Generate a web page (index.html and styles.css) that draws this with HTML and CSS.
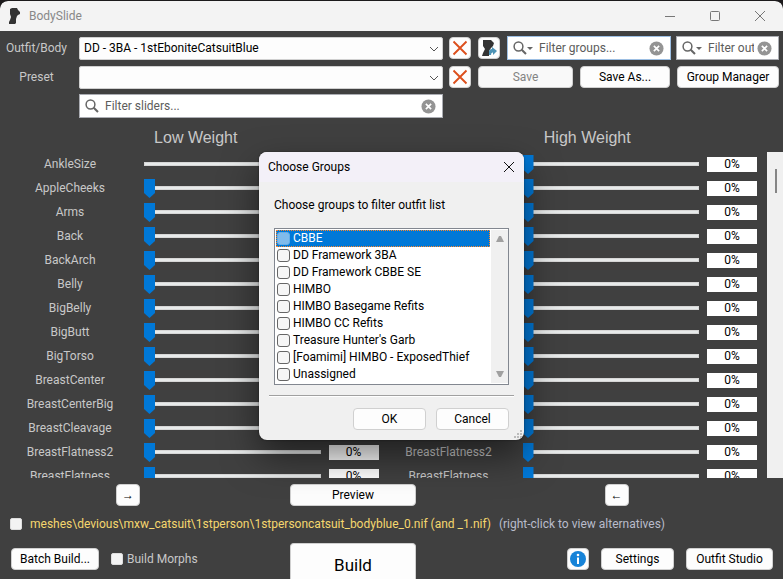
FILE: index.html
```html
<!DOCTYPE html>
<html lang="en">
<head>
    <meta charset="UTF-8">
    <meta name="viewport" content="width=device-width, initial-scale=1.0">
    <title>BodySlide</title>
    <link rel="stylesheet" href="styles.css">
</head>
<body>

    <!-- Shared icons -->
    <svg class="sprite" aria-hidden="true">
        <symbol id="icon-search" viewBox="0 0 14 14">
            <circle cx="5.500" cy="5.500" r="4.400" fill="none" stroke="#666" stroke-width="1.500"/>
            <path d="M8.700 8.700L13 13" stroke="#666" stroke-width="2"/>
        </symbol>
        <symbol id="icon-clear" viewBox="0 0 16 16">
            <circle cx="8" cy="8" r="7.500" fill="#949494"/>
            <path d="M5.200 5.200L10.800 10.800M10.800 5.200L5.200 10.800" stroke="#fff" stroke-width="1.800"/>
        </symbol>
        <symbol id="icon-delete" viewBox="0 0 16 16">
            <path d="M1.500 1.500L14.500 14.500M14.500 1.500L1.500 14.500" stroke="#dc4f1c" stroke-width="1.900"/>
        </symbol>
        <symbol id="icon-chevron" viewBox="0 0 10 6">
            <path d="M1 1L5 5L9 1" fill="none" stroke="#555" stroke-width="1"/>
        </symbol>
        <symbol id="icon-body" viewBox="0 0 14 16">
            <path d="M2 1L4 0H9L10 2L12 4L12 6L10 7L9 8L8 11V15L7 16H1V14L2 12L3 9L2 6Z" fill="#333"/>
        </symbol>
    </svg>

    <div class="window">
        <header class="titlebar">
            <svg class="app-icon"><use href="#icon-body"/></svg>
            <h1>BodySlide</h1>
            <div class="window-buttons">
                <button type="button" aria-label="Minimize"><svg viewBox="0 0 10 10"><path d="M0 5.5H10" stroke="#777"/></svg></button>
                <button type="button" aria-label="Maximize"><svg viewBox="0 0 10 10"><rect x=".5" y=".5" width="9" height="9" rx="1" fill="none" stroke="#777"/></svg></button>
                <button type="button" aria-label="Close"><svg viewBox="0 0 10 10"><path d="M0 0L10 10M10 0L0 10" stroke="#777"/></svg></button>
            </div>
        </header>

        <!-- Outfit and preset selection -->
        <div class="toolbar">
            <label for="outfit">Outfit/Body</label>
            <div class="combo">
                <select id="outfit">
                    <option>DD - 3BA - 1stEboniteCatsuitBlue</option>
                </select>
                <svg class="chevron"><use href="#icon-chevron"/></svg>
            </div>
            <div class="tools">
                <button type="button" class="btn icon-btn" aria-label="Clear outfit"><svg><use href="#icon-delete"/></svg></button>
                <button type="button" class="btn icon-btn" aria-label="Choose outfit">
                    <svg viewBox="0 0 16 16">
                        <path d="M2 0H10L13 3L12 6L10 8L8 11V16H1L2 13L4 9L2 6Z" fill="#333"/>
                        <path d="M8 15V12Q8 9 11 9V7L16 11L12 15V12.500Q10 12 10 15Z" fill="#4d93b5"/>
                    </svg>
                </button>
                <div class="search search-groups focused">
                    <svg class="magnifier"><use href="#icon-search"/></svg><span class="drop"></span>
                    <input type="text" aria-label="Filter groups" placeholder="Filter groups...">
                    <button type="button" class="clear" aria-label="Clear groups filter"><svg><use href="#icon-clear"/></svg></button>
                </div>
                <div class="search search-outfits">
                    <svg class="magnifier"><use href="#icon-search"/></svg><span class="drop"></span>
                    <input type="text" aria-label="Filter outfits" placeholder="Filter outfits...">
                    <button type="button" class="clear" aria-label="Clear outfits filter"><svg><use href="#icon-clear"/></svg></button>
                </div>
            </div>

            <label for="preset">Preset</label>
            <div class="combo">
                <select id="preset"><option></option></select>
                <svg class="chevron"><use href="#icon-chevron"/></svg>
            </div>
            <div class="tools">
                <button type="button" class="btn icon-btn" aria-label="Clear preset"><svg><use href="#icon-delete"/></svg></button>
                <button type="button" class="btn save" disabled>Save</button>
                <button type="button" class="btn save-as">Save As...</button>
                <button type="button" class="btn group-manager">Group Manager</button>
            </div>

            <div class="search search-sliders">
                <svg class="magnifier"><use href="#icon-search"/></svg>
                <input type="text" aria-label="Filter sliders" placeholder="Filter sliders...">
                <button type="button" class="clear" aria-label="Clear sliders filter"><svg><use href="#icon-clear"/></svg></button>
            </div>
        </div>

        <div class="weights">
            <h2>Low Weight</h2>
            <h2>High Weight</h2>
        </div>

        <!-- Sliders are filled in by the script below -->
        <div class="slider-area">
            <div class="sliders" id="sliders"></div>
            <div class="scrollbar"><div class="scroll-thumb"></div></div>
        </div>

        <div class="preview-bar">
            <button type="button" class="btn arrow" aria-label="Copy low to high">→</button>
            <button type="button" class="btn wide">Preview</button>
            <button type="button" class="btn arrow" aria-label="Copy high to low">←</button>
        </div>

        <div class="output">
            <input type="checkbox" class="check" id="outputPath">
            <label for="outputPath">meshes\devious\mxw_catsuit\1stperson\1stpersoncatsuit_bodyblue_0.nif (and _1.nif)</label>
            <span>(right-click to view alternatives)</span>
        </div>

        <footer class="footer">
            <div class="footer-left">
                <button type="button" class="btn batch">Batch Build...</button>
                <input type="checkbox" class="check" id="morphs">
                <label for="morphs">Build Morphs</label>
            </div>
            <button type="button" class="btn wide build">Build</button>
            <div class="footer-right">
                <button type="button" class="btn icon-btn" aria-label="About">
                    <svg viewBox="0 0 16 16">
                        <circle cx="8" cy="8" r="8" fill="#1683d8"/>
                        <circle cx="8" cy="4" r="1.300" fill="#fff"/>
                        <path d="M8 6.500V13" stroke="#fff" stroke-width="2"/>
                    </svg>
                </button>
                <button type="button" class="btn settings">Settings</button>
                <button type="button" class="btn studio">Outfit Studio</button>
            </div>
        </footer>

        <!-- Group chooser -->
        <div class="overlay">
            <dialog open class="dialog" aria-labelledby="dialogTitle">
                <div class="dialog-title">
                    <h2 id="dialogTitle">Choose Groups</h2>
                    <button type="button" aria-label="Close"><svg viewBox="0 0 10 10"><path d="M0 0L10 10M10 0L0 10" stroke="#111"/></svg></button>
                </div>
                <p>Choose groups to filter outfit list</p>
                <div class="listbox">
                    <div class="groups" id="groups"></div>
                    <div class="list-scroll">
                        <svg viewBox="0 0 10 8"><path d="M1 7L4 1H6L9 7Z" fill="#a0a0a0"/></svg>
                        <svg viewBox="0 0 10 8"><path d="M1 1L4 7H6L9 1Z" fill="#a0a0a0"/></svg>
                    </div>
                </div>
                <hr>
                <div class="dialog-buttons">
                    <button type="button" class="btn">OK</button>
                    <button type="button" class="btn">Cancel</button>
                </div>
                <svg class="grip" viewBox="0 0 8 8">
                    <path d="M6 0h2v2h-2zM3 3h2v2h-2zM6 3h2v2h-2zM0 6h2v2h-2zM3 6h2v2h-2zM6 6h2v2h-2z" fill="#bbb"/>
                </svg>
            </dialog>
        </div>
    </div>

    <script>
        const sliderNames = [
            'AnkleSize', 'AppleCheeks', 'Arms', 'Back', 'BackArch', 'Belly', 'BigBelly',
            'BigButt', 'BigTorso', 'BreastCenter', 'BreastCenterBig', 'BreastCleavage',
            'BreastFlatness2', 'BreastFlatness'
        ];
        const groupNames = [
            'CBBE', 'DD Framework 3BA', 'DD Framework CBBE SE', 'HIMBO',
            'HIMBO Basegame Refits', 'HIMBO CC Refits', "Treasure Hunter's Garb",
            '[Foamimi] HIMBO - ExposedThief', 'Unassigned'
        ];

        const sliders = document.getElementById('sliders');
        const groups = document.getElementById('groups');

        // One low and one high slider for every name
        sliderNames.forEach((name, i) => {
            ['low', 'high'].forEach((side) => {
                const id = side + name;
                const hidden = i === 0 && side === 'low' ? ' class="no-thumb"' : '';
                sliders.innerHTML += `
                    <div class="slider-row">
                        <label for="${id}">${name}</label>
                        <input type="range" id="${id}" min="0" max="100" value="0"${hidden}>
                        <input type="text" aria-label="${name} ${side} value" value="0%">
                    </div>`;
            });
        });

        groupNames.forEach((name, i) => {
            groups.innerHTML += `
                <label class="group${i === 0 ? ' selected' : ''}">
                    <input type="checkbox"><span>${name}</span>
                </label>`;
        });
    </script>

</body>
</html>
```
FILE: styles.css
```css
* {
    margin: 0;
    padding: 0;
    box-sizing: border-box;
}

body {
    background: #1c1a1b;
    color: #c8c8c8;
    font-family: Roboto, "Open Sans", sans-serif;
    font-size: 12px;
    line-height: 16px;
    overflow: hidden;
}

button,
input,
select {
    font: inherit;
}

h1,
h2 {
    font-size: 12px;
    font-weight: 400;
}

svg {
    display: block;
    flex: none;
}

.sprite {
    position: absolute;
    width: 0;
    height: 0;
}

.window {
    position: relative;
    display: flex;
    flex-direction: column;
    height: 100vh;
    border-top: 1px solid #1c1a1b;
    border-radius: 8px 8px 0 0;
    background: #404040;
    overflow: hidden;
}

/* Title bar */
.titlebar {
    display: flex;
    align-items: center;
    flex: none;
    height: 30px;
    padding: 0 1px 0 8px;
    background: #f3f3f3;
    color: #888;
    border-radius: 8px 8px 0 0;
}

.app-icon {
    width: 14px;
    height: 16px;
    margin-right: 7px;
}

.window-buttons {
    display: flex;
    margin-left: auto;
}

.window-buttons button {
    display: flex;
    align-items: center;
    justify-content: center;
    width: 45px;
    height: 28px;
    border: none;
    background: none;
}

.window-buttons svg {
    width: 10px;
    height: 10px;
}

/* Buttons */
.btn {
    height: 22px;
    border: 1px solid #d0d0d0;
    border-radius: 4px;
    background: #fdfdfd;
    color: #000;
    white-space: nowrap;
    line-height: 18px;
}

.btn:disabled {
    background: #f9f9f9;
    color: #838383;
}

.icon-btn {
    display: flex;
    align-items: center;
    justify-content: center;
    flex: none;
    width: 22px;
}

.icon-btn svg {
    width: 16px;
    height: 16px;
}

/* Toolbar */
.toolbar {
    display: grid;
    grid-template-columns: 73px 1fr 330px;
    grid-template-rows: 24px 24px 24px;
    gap: 5px 6px;
    flex: none;
    align-items: center;
    padding: 5px 4px 0 0;
}

.toolbar > label {
    text-align: center;
}

.combo {
    position: relative;
}

.combo select {
    display: block;
    appearance: none;
    width: 100%;
    height: 23px;
    padding: 0 20px 0 4px;
    border: 1px solid #d0d0d0;
    border-radius: 2px;
    background: #fdfdfd;
    color: #000;
}

.chevron {
    position: absolute;
    top: 9px;
    right: 4px;
    width: 10px;
    height: 6px;
    pointer-events: none;
}

.tools {
    display: flex;
    align-items: center;
    gap: 7px;
}

.search {
    display: flex;
    align-items: center;
    height: 24px;
    padding: 0 6px 0 5px;
    border: 1px solid #abadb3;
    background: #fff;
}

.search input {
    flex: 1;
    min-width: 0;
    margin-left: 6px;
    border: none;
    outline: none;
    background: none;
    color: #000;
}

.search input::placeholder {
    color: #5c5c5c;
    opacity: 1;
}

.focused {
    border-color: #9dbfe3;
}

.magnifier {
    width: 14px;
    height: 14px;
}

.drop {
    border: 3px solid transparent;
    border-top-color: #666;
    border-bottom: none;
}

.clear {
    margin-left: 3px;
    border: none;
    background: none;
}

.clear svg {
    width: 15px;
    height: 15px;
}

.search-sliders {
    grid-column: 2;
}

.search-groups {
    flex: 1;
    min-width: 0;
}

.search-outfits {
    width: 103px;
    margin-left: -2px;
}

.save {
    width: 95px;
}

.save-as {
    flex: 1;
}

.group-manager {
    width: 102px;
}

/* Weight headings */
.weights {
    display: grid;
    grid-template-columns: 1fr 1fr;
    align-items: center;
    flex: none;
    height: 34px;
    padding-top: 6px;
    text-align: center;
}

.weights h2 {
    font-family: "Liberation Sans", Arial, sans-serif;
    font-size: 16px;
}

/* Slider list */
.slider-area {
    display: flex;
    flex: 1;
    min-height: 0;
    overflow: hidden;
}

.sliders {
    display: grid;
    grid-template-columns: 1fr 1fr;
    grid-auto-rows: 24px;
    flex: 1;
    padding-right: 10px;
}

.slider-row {
    display: flex;
    align-items: center;
    gap: 8px;
}

.slider-row label {
    width: 140px;
    margin-right: -4px;
    text-align: center;
}

.slider-row input[type="text"] {
    width: 50px;
    height: 15px;
    border: none;
    background: #fff;
    color: #000;
    text-align: center;
}

.slider-row input[type="range"] {
    appearance: none;
    flex: 1;
    min-width: 0;
    height: 20px;
    background: none;
}

.slider-row input[type="range"]::-webkit-slider-runnable-track {
    height: 4px;
    border: 1px solid #d6d6d6;
    background: #e7eaea;
}

.slider-row input[type="range"]::-webkit-slider-thumb {
    appearance: none;
    width: 11px;
    height: 19px;
    margin: -8px 0 0 -1px;
    background: #0078d7;
    clip-path: polygon(0 0, 100% 0, 100% 74%, 50% 100%, 0 74%);
}

.slider-row .no-thumb::-webkit-slider-thumb {
    visibility: hidden;
}

.scrollbar {
    width: 16px;
    padding: 17px 6px 0 8px;
    background: #f0f0f0;
}

.scroll-thumb {
    height: 24px;
    background: #858585;
}

/* Bottom bars */
.preview-bar,
.footer {
    display: grid;
    grid-template-columns: 256fr 194fr 333fr;
    flex: none;
}

.preview-bar {
    align-items: center;
    justify-items: center;
    height: 33px;
}

.arrow {
    width: 24px;
    font-family: "Liberation Sans", Arial, sans-serif;
}

.wide {
    width: 126px;
}

.output {
    display: flex;
    align-items: center;
    flex: none;
    height: 26px;
    padding-left: 10px;
    color: #b9bccb;
    white-space: nowrap;
}

.output label {
    margin: 0 8px;
    color: #f5d76e;
}

.check {
    appearance: none;
    flex: none;
    width: 12px;
    height: 12px;
    border: 1px solid #ddd;
    border-radius: 2px;
    background: #f3f3f3;
}

.footer {
    height: 42px;
    padding-top: 6px;
}

.footer-left,
.footer-right {
    display: flex;
    align-items: center;
    height: 32px;
    white-space: nowrap;
}

.footer-left {
    padding-left: 11px;
}

.footer-left .check {
    margin: 0 4px 0 12px;
}

.footer-right {
    justify-content: flex-end;
    gap: 12px;
    padding-right: 10px;
}

.batch {
    width: 88px;
}

.settings {
    width: 73px;
}

.studio {
    width: 87px;
}

.build {
    justify-self: center;
    height: 36px;
    padding-top: 6px;
    border-bottom: none;
    border-radius: 4px 4px 0 0;
    font-size: 17px;
}

/* Group dialog */
.overlay {
    position: absolute;
    inset: 0;
    display: flex;
    align-items: center;
    justify-content: center;
    padding-top: 12px;
}

.dialog {
    position: relative;
    width: 265px;
    border: none;
    border-radius: 8px;
    background: #f0f0f0;
    color: #000;
    box-shadow: 0 0 2px rgba(0, 0, 0, 0.5), 0 16px 36px rgba(0, 0, 0, 0.5);
    overflow: hidden;
}

.dialog-title {
    display: flex;
    align-items: center;
    justify-content: space-between;
    height: 30px;
    padding: 0 10px 0 9px;
    background: #f3f0f8;
}

.dialog-title button {
    border: none;
    background: none;
}

.dialog-title svg {
    width: 10px;
    height: 10px;
}

.dialog p {
    padding: 15px 15px;
}

.listbox {
    display: flex;
    margin: 0 15px;
    padding: 1px 0;
    border: 1px solid #828790;
    background: #fff;
}

.groups {
    flex: 1;
    padding-left: 1px;
}

.group {
    display: flex;
    align-items: center;
    height: 17px;
    padding-left: 1px;
    line-height: 17px;
    white-space: nowrap;
}

.group input {
    appearance: none;
    width: 13px;
    height: 13px;
    margin-right: 3px;
    border: 1px solid #666;
    border-radius: 3px;
    background: #f6f6f6;
}

.selected {
    outline: 1px dotted #ff8728;
    outline-offset: -1px;
    background: #0078d7;
    color: #fff;
}

.selected input {
    border-color: #66aee7;
    background: #80bbeb;
}

.list-scroll {
    display: flex;
    flex-direction: column;
    justify-content: space-between;
    align-items: center;
    width: 17px;
    margin-left: 1px;
    padding: 5px 0;
    background: #f0f0f0;
}

.list-scroll svg {
    width: 10px;
    height: 8px;
}

.dialog hr {
    margin: 10px 10px 11px;
    border: none;
    border-top: 1px solid #a0a0a0;
    border-bottom: 1px solid #fff;
}

.dialog-buttons {
    display: flex;
    justify-content: flex-end;
    gap: 10px;
    padding: 0 15px 10px;
}

.dialog-buttons .btn {
    width: 73px;
}

.grip {
    position: absolute;
    right: 2px;
    bottom: 2px;
    width: 8px;
    height: 8px;
}
```
